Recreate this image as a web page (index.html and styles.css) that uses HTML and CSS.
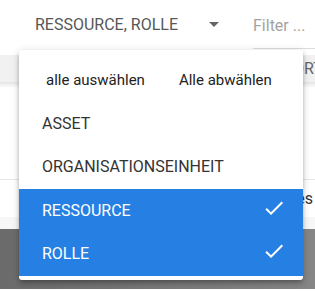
FILE: index.html
```html
<!DOCTYPE html>
<html lang="de">
<head>
  <meta charset="UTF-8">
  <meta name="viewport" content="width=device-width, initial-scale=1.0">
  <title>Filter</title>
  <link rel="stylesheet" href="styles.css">
</head>
<body>
  <!-- Toolbar with type select and filter field -->
  <div class="toolbar">
    <div class="type-select">
      <span class="type-value">RESSOURCE, ROLLE</span>
      <span class="caret"></span>
    </div>
    <div class="filter-field">
      <span class="filter-placeholder">Filter ...</span>
    </div>
  </div>

  <!-- Table behind the open select panel -->
  <div class="table">
    <div class="table-head">
      <span class="head-cell">ORT</span>
    </div>
    <div class="table-shadow"></div>
    <div class="table-body">
      <div class="table-row">
        <span class="row-cell">Rolle des Prozesses</span>
      </div>
    </div>
    <div class="table-foot"></div>
  </div>
  <div class="backdrop"></div>

  <!-- Open select panel -->
  <div class="select-panel">
    <div class="panel-actions">
      <button class="text-button first">alle auswählen</button>
      <button class="text-button">Alle abwählen</button>
    </div>
    <div class="option">ASSET</div>
    <div class="option">ORGANISATIONSEINHEIT</div>
    <div class="option selected">
      RESSOURCE
      <svg class="check" viewBox="0 0 24 24" width="24" height="24"><path d="M9 16.17L4.83 12l-1.42 1.41L9 19 21 7l-1.41-1.41z"/></svg>
    </div>
    <div class="option selected">
      ROLLE
      <svg class="check" viewBox="0 0 24 24" width="24" height="24"><path d="M9 16.17L4.83 12l-1.42 1.41L9 19 21 7l-1.41-1.41z"/></svg>
    </div>
  </div>
</body>
</html>
```

FILE: styles.css
```css
*,
*::before,
*::after {
  box-sizing: border-box;
  margin: 0;
  padding: 0;
}

body {
  font-family: Roboto, "Liberation Sans", sans-serif;
  font-size: 16px;
  background-color: #fff;
  width: 315px;
  height: 291px;
  overflow: hidden;
  position: relative;
}

/* Toolbar */
.toolbar {
  display: flex;
  height: 49px;
  padding-left: 35px;
}

.type-select {
  width: 184px;
  display: flex;
  align-items: center;
  justify-content: space-between;
  color: #575757;
}

.caret {
  width: 0;
  height: 0;
  border-left: 5px solid transparent;
  border-right: 5px solid transparent;
  border-top: 5px solid #666;
  margin-top: -1px;
}

.filter-field {
  margin-left: 34px;
  flex: 1;
  display: flex;
  align-items: center;
  padding-top: 3px;
  border-bottom: 1px solid #dcdcdc;
  white-space: nowrap;
}

.filter-placeholder {
  color: #a3a3a3;
}

/* Table behind */
.table {
  margin-top: 6px;
}

.table-head {
  height: 27px;
  background-color: #f1f1f1;
  display: flex;
  align-items: center;
  white-space: nowrap;
  overflow: hidden;
  color: #666;
}

.head-cell {
  margin-left: 293px;
}

.table-shadow {
  height: 6px;
  background: linear-gradient(#e4e4e4, #fff);
}

.table-body {
  height: 129px;
  display: flex;
  flex-direction: column;
  justify-content: flex-end;
}

.table-row {
  height: 38px;
  border-top: 1px solid #e6e6e6;
  display: flex;
  align-items: center;
  justify-content: flex-end;
  padding-right: 2px;
  white-space: nowrap;
  overflow: hidden;
  color: #333;
}

.table-foot {
  height: 12px;
  background-color: #f7f7f7;
}

.backdrop {
  height: 60px;
  background: linear-gradient(to right, #6b6b6b, #868686);
}

/* Select panel */
.select-panel {
  position: absolute;
  left: 19px;
  top: 50px;
  width: 284px;
  padding: 8px 0 4px;
  background-color: #fff;
  border-radius: 3px;
  box-shadow: 0 2px 4px -1px rgba(0, 0, 0, 0.2),
              0 4px 5px 0 rgba(0, 0, 0, 0.14),
              0 1px 10px 0 rgba(0, 0, 0, 0.12);
}

.panel-actions {
  height: 43.5px;
  display: flex;
  align-items: center;
  padding-left: 11px;
}

.text-button {
  font-family: inherit;
  font-size: 15px;
  color: #222;
  background: none;
  border: none;
  padding: 0 16px;
  line-height: 36px;
}

.text-button.first {
  margin-right: 2px;
}

.option {
  height: 43.5px;
  display: flex;
  align-items: center;
  justify-content: space-between;
  padding: 0 17px 0 23px;
  color: #333;
}

.option.selected {
  background-color: #2680e3;
  color: #fff;
}

.check {
  fill: #fff;
  margin-top: -5px;
}
```
